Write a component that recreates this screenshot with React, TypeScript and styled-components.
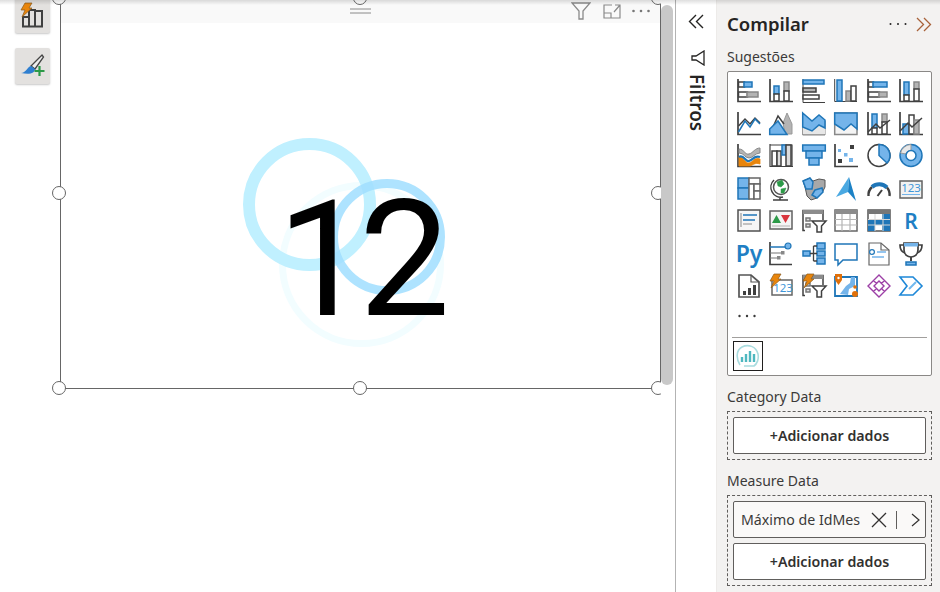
import type { ReactNode } from 'react'
import styled, { createGlobalStyle } from 'styled-components'

const D = '#404040'
const B = '#1f76b8'
const L = '#74b4ea'
const G = '#b4b4b4'
const O = '#e8850c'

const Letters = styled.text`
  font-family: "Noto Sans", sans-serif;
  font-weight: 600;
  fill: #1f7fc4;
  text-anchor: middle;
`

const Value = styled.text`
  font-family: "Noto Sans", sans-serif;
  fill: #3f96d8;
  text-anchor: middle;
`

const Box = ({ x, y, w, h, f = '#fff', s = D }: { x: number; y: number; w: number; h: number; f?: string; s?: string }) => (
  <rect x={x} y={y} width={w} height={h} fill={f} stroke={s} strokeWidth="1.5" />
)
const Ln = ({ d, s = D, w = 1.5, f = 'none' }: { d: string; s?: string; w?: number; f?: string }) => (
  <path d={d} stroke={s} strokeWidth={w} fill={f} />
)
const Axis = () => <Ln d="M1 0V22.5H24" w={1.7} />
const Bolt = () => (
  <path d="M5 0H12L9 5H12L2 14L5 7H1Z" fill={O} stroke="#8a5a1c" strokeWidth="0.7" />
)
const MoreIcon = ({ color, r = 1.2 }: { color: string; r?: number }) => (
  <svg width="18" height="4" viewBox="0 0 18 4">
    <circle cx="1.5" cy="2" r={r} fill={color} />
    <circle cx="9" cy="2" r={r} fill={color} />
    <circle cx="16.5" cy="2" r={r} fill={color} />
  </svg>
)
const SlicerBody = () => (
  <>
    <Ln d="M3 21.5H1V1.5H21V11" />
    <rect x="1" y="1" width="20" height="4" fill="#8c8c8c" />
    <Box x={4} y={9} w={4} h={3} f="#ddd" s="#777" />
    <Box x={4} y={15} w={4} h={3} f="#ddd" s="#777" />
    <Ln d="M10 12H24L19.5 17V23H15V17Z" f="#fff" />
  </>
)

const icons: ReactNode[] = [
  <>
    <Axis />
    <Box x={1.5} y={3} w={6} h={5} />
    <Box x={7} y={3} w={8} h={5} f={L} s={B} />
    <Box x={1.5} y={13} w={9} h={5} />
    <Box x={10} y={13} w={11} h={5} f={G} s="#888" />
  </>,
  <>
    <Axis />
    <Box x={5} y={7} w={5} h={8} f={L} s={B} />
    <Box x={5} y={15} w={5} h={7} />
    <Box x={15} y={3} w={5} h={9} f={G} s="#888" />
    <Box x={15} y={12} w={5} h={10} />
  </>,
  <>
    <Ln d="M1 0V23.5H23" w={1} />
    <Box x={1} y={1} w={21} h={4} f={L} s={B} />
    <Box x={1} y={9} w={13} h={4} f={G} s={D} />
    <Box x={1} y={16} w={16} h={4} />
  </>,
  <>
    <Ln d="M0.7 0V22.5H23" w={1} />
    <Box x={3} y={1} w={5} h={21} f={L} s={B} />
    <Box x={12} y={12} w={5} h={10} f={G} s="#888" />
    <Box x={17} y={7} w={5} h={15} />
  </>,
  <>
    <Axis />
    <Box x={1.5} y={3} w={5} h={5} />
    <Box x={6} y={3} w={14} h={5} f={L} s={B} />
    <Box x={1.5} y={13} w={11} h={5} />
    <Box x={12} y={13} w={8} h={5} f={G} s="#888" />
  </>,
  <>
    <Axis />
    <Box x={5} y={3} w={5} h={13} f={L} s={B} />
    <Box x={5} y={16} w={5} h={6} />
    <Box x={15} y={3} w={5} h={7} f={G} s="#888" />
    <Box x={15} y={10} w={5} h={12} />
  </>,
  <>
    <Axis />
    <Ln d="M1.5 14L8 7L13 12L18 6L23 11" />
    <Ln d="M1.5 20L8 9L13 15L18 7L23 12" s={B} />
  </>,
  <>
    <Ln d="M14 11L18 1L23 12V22H16Z" f={G} s="#999" w={1} />
    <Ln d="M4 15L9 4L15 12" />
    <Ln d="M0.7 22.5V17L9 9L18 22.5Z" f={L} s={B} />
  </>,
  <>
    <Ln d="M0.7 9V23H23V9" f={G} s="#888" w={1} />
    <rect x="1" y="14" width="22" height="8" fill="#e7e7e7" />
    <Ln d="M0.7 1L10 9L17 3L23 8V16L17 13L10 19L0.7 15Z" f={L} s={B} />
  </>,
  <>
    <Ln d="M0.7 1H23V22.5H0.7Z" f="#f4f4f4" s="#888" />
    <Ln d="M0.7 1H23V17L17 12L10 18L0.7 12Z" f={L} s={B} />
  </>,
  <>
    <Axis />
    <Box x={5} y={2} w={5} h={14} f={L} s={B} />
    <Box x={5} y={16} w={5} h={6} />
    <Box x={15} y={2} w={5} h={8} f={G} s="#888" />
    <Box x={15} y={10} w={5} h={12} />
    <Ln d="M1 20L9 12L13 16L23 8" />
  </>,
  <>
    <Axis />
    <Box x={4} y={12} w={6} h={10} f={L} s={B} />
    <Box x={10} y={3} w={5} h={19} />
    <Box x={15} y={8} w={5} h={14} f={G} s="#888" />
    <Ln d="M1 19L9 11L13 15L23 6" />
  </>,
  <>
    <Axis />
    <Ln d="M2 5C7 5 8 11 12 10S18 4 23 4V9C18 9 16 14 12 14S7 9 2 9Z" f={G} s="#888" w={1} />
    <Ln d="M2 13C6 11 8 20 12 19S17 13 23 15V20C17 18 16 22 12 22H2Z" f={O} s={O} w={0.8} />
    <Ln d="M2 13C7 10 8 18 12 17S17 11 23 13" s={B} w={2.2} />
  </>,
  <>
    <Ln d="M1 0V22.5H24M1 1H23V22" w={1.2} />
    <Box x={3} y={7} w={5} h={15} />
    <Box x={8} y={7} w={4} h={15} f="#ddd" />
    <Box x={13} y={1} w={4} h={10} f={L} s={B} />
    <Box x={17} y={1} w={5} h={21} f="#ddd" />
  </>,
  <>
    <Box x={0.7} y={1} w={22.6} h={6} f={L} s={B} />
    <Box x={4} y={7} w={16} h={7} f={L} s={B} />
    <Box x={7} y={14} w={10} h={7} f={L} s={B} />
  </>,
  <>
    <Axis />
    <rect x="4" y="5" width="3" height="3" fill={L} />
    <rect x="16" y="1" width="4" height="4" fill={D} />
    <rect x="10" y="9" width="3.5" height="3.5" fill={L} />
    <rect x="4" y="15" width="4" height="4" fill={D} />
    <rect x="15" y="14" width="4" height="4" fill={L} />
  </>,
  <>
    <circle cx="12" cy="11.5" r="11" fill="#fff" stroke={D} strokeWidth="1.5" />
    <Ln d="M12 11.5V0.5A11 11 0 0 1 20 19Z" f={L} s={B} />
  </>,
  <>
    <circle cx="12" cy="11.5" r="11" fill={L} stroke={B} strokeWidth="1.5" />
    <Ln d="M1.5 9A11 11 0 0 1 12 0.5V6.5A5 5 0 0 0 7 10Z" f="#e8e8e8" s="#999" w={1} />
    <circle cx="12" cy="11.5" r="5" fill="#fff" stroke={B} strokeWidth="1.5" />
  </>,
  <>
    <Box x={1} y={1} w={11} h={10} f={L} s={B} />
    <Box x={1} y={11} w={11} h={11} f={L} s={B} />
    <Box x={12} y={1} w={11} h={6} f="#fff" s="#666" />
    <Box x={12} y={7} w={5} h={15} f="#fff" s="#666" />
    <Box x={17} y={7} w={6} h={7} f="#fff" s="#666" />
    <Box x={17} y={14} w={6} h={8} f="#fff" s="#666" />
  </>,
  <>
    <circle cx="12" cy="10" r="7.5" fill="#fff" stroke="#555" strokeWidth="1.5" />
    <Ln d="M8 5L13 3L15 7L12 10L9 9ZM12 12L17 11L15 16L12 16Z" f="#2c9a48" s="#2c9a48" w={0.5} />
    <Ln d="M5 3A10 10 0 0 0 14 20M11 20V23M4 23H19" w={1.5} />
  </>,
  <>
    <Ln d="M1 4L8 1L11 4L17 2L23 3V10L20 16L15 21L9 23L5 19L3 10Z" f="#a8a8a8" s="#555" w={1} />
    <Ln d="M1 4L8 1L11 5L10 12L4 12Z" f={L} s={B} />
    <Ln d="M13 13L20 11L21 15L15 21L10 18Z" f={L} s={B} />
  </>,
  <>
    <path d="M2 20L15 0L14 15Z" fill="#4aa9e2" />
    <path d="M15 0L22 24L14 15Z" fill="#1c82c6" />
  </>,
  <>
    <Ln d="M1.5 19A11 11 0 0 1 5 10" w={2.4} />
    <Ln d="M5 10A11 11 0 0 1 20 10.5" s={B} w={4} />
    <Ln d="M20 10.5A11 11 0 0 1 22.5 19" w={2.4} />
    <Ln d="M10.5 19L15 13" w={2} />
  </>,
  <>
    <Box x={1} y={4} w={22} h={17} f="#f2f2f2" s="#606060" />
    <Value x="12" y="15" fontSize="11.5">123</Value>
    <Ln d="M3 17.5H21" s={L} w={1} />
  </>,
  <>
    <Box x={1} y={1} w={22} h={21} f="#f6f6f6" s="#505050" />
    <Ln d="M6 6H20M6 11H18" s={B} w={1.6} />
    <Ln d="M6 15H15" s={G} w={1.6} />
    <Ln d="M4 4V18" s="#888" w={1} />
  </>,
  <>
    <Box x={1} y={2} w={22} h={18} f="#f4f4f4" s="#606060" />
    <path d="M3 14L7.5 6L12 14Z" fill="#2c9a48" />
    <path d="M12 6H21L16.5 14Z" fill="#d9343c" />
    <Ln d="M3 17H21" s={G} w={1} />
  </>,
  <SlicerBody />,
  <>
    <Box x={1} y={1} w={22} h={21} f="#fff" s="#666" />
    <rect x="1" y="1" width="22" height="4" fill="#8c8c8c" />
    <Ln d="M8 5V22M16 5V22M1 10.5H23M1 16H23" s={G} w={1.2} />
  </>,
  <>
    <Box x={1} y={1} w={22} h={21} f="#fff" s="#555" />
    <rect x="1" y="1" width="22" height="4" fill="#777" />
    <rect x="15" y="5" width="8" height="17" fill={B} />
    <rect x="1" y="10" width="22" height="6" fill={B} />
    <rect x="1" y="16" width="7" height="6" fill={B} />
    <Ln d="M8 5V22M16 5V22M1 10.5H23M1 16H23" s="#d5d5d5" w={1} />
  </>,
  <Letters x="12" y="19.5" fontSize="21">R</Letters>,
  <Letters x="12" y="19.5" fontSize="23">Py</Letters>,
  <>
    <Ln d="M1 0V22.5H23" w={1.7} />
    <Ln d="M1 5H17" s={B} w={1.5} />
    <circle cx="19" cy="4" r="3" fill={L} stroke={B} strokeWidth="1.2" />
    <Ln d="M1 11H13M1 16H9" s="#777" w={1.2} />
    <rect x="12" y="9" width="3.5" height="3.5" fill="#888" />
    <rect x="8" y="14" width="3.5" height="3.5" fill="#888" />
  </>,
  <>
    <Box x={1} y={9} w={7} h={5} f={L} s={B} />
    <Box x={15} y={1} w={8} h={6} f={L} s={B} />
    <Box x={15} y={9} w={8} h={5} f={L} s={B} />
    <Box x={15} y={16} w={8} h={6} f={L} s={B} />
    <Ln d="M8 11.5H15M11.5 4V19M11.5 4H15M11.5 19H15" w={1.3} />
  </>,
  <Ln d="M1 2H23V18H9L4 23V18H1Z" f="#fff" s={B} />,
  <>
    <Ln d="M2 1H14L22 8V23H2Z" f="#fff" s="#666" w={1.2} />
    <Ln d="M14 1V8H22" s="#666" w={1.2} />
    <circle cx="5" cy="10" r="2.4" fill="#fff" stroke={B} strokeWidth="1.2" />
    <Ln d="M10 10H19M5 15H17" s={L} w={1.4} />
  </>,
  <>
    <Ln d="M5 1H19V8C19 13 15 15 12 15S5 13 5 8Z" f="#fff" w={1.7} />
    <rect x="5" y="1" width="14" height="3.5" fill={L} />
    <Ln d="M5 3H1C1 8 3 10 6 11M19 3H23C23 8 21 10 18 11" w={1.7} />
    <Ln d="M12 15V19" w={2} />
    <Box x={7} y={20} w={10} h={3} f={L} s={B} />
  </>,
  <>
    <Ln d="M2 1H14L22 8V23H2Z" f="#fff" s="#555" w={1.7} />
    <Ln d="M14 1V8H22" s="#555" w={1.2} />
    <rect x="6" y="17" width="3" height="4" fill={D} />
    <rect x="11" y="14" width="3" height="7" fill={D} />
    <rect x="16" y="11" width="3" height="10" fill={D} />
  </>,
  <>
    <Box x={3} y={6} w={20} h={15} f="#fff" s="#666" />
    <Value x="14" y="17.5" fontSize="11.5">123</Value>
    <Bolt />
  </>,
  <>
    <SlicerBody />
    <Bolt />
  </>,
  <>
    <Ln d="M1 3H23V22H1Z" f="#fff" s={B} w={1.8} />
    <Ln d="M6 20L12 12L16 9L17 3H21V12L15 15L14 21Z" f={L} s="none" />
    <path d="M1 0H8V6L4.5 11L1 6Z" fill="#e0700a" />
    <circle cx="4.5" cy="4" r="1.2" fill="#fff" />
    <circle cx="21" cy="13" r="1.8" fill="#e0700a" />
    <circle cx="21" cy="20" r="3" fill="#e0700a" />
  </>,
  <Ln d="M12 1L23 12L12 23L1 12ZM12 7L17 12L12 17L7 12ZM6.5 6.5L9.5 9.5M17.5 6.5L14.5 9.5M6.5 17.5L9.5 14.5M17.5 17.5L14.5 14.5" s="#9c3fa6" w={1.4} />,
  <>
    <Ln d="M1 3H14L23 12L14 21H1L8 12Z" f="#fff" s="#1e88d8" w={1.6} />
    <Ln d="M10 15L17 8" s="#6fb8ee" w={2} />
  </>,
]

const GlobalStyle = createGlobalStyle`
  html, body {
    margin: 0;
    height: 100%;
    overflow: hidden;
    font-family: "Noto Sans", "Open Sans", sans-serif;
    color: #252423;
  }
`

export default function App() {
  return (
    <>
      <GlobalStyle />
      <Page>
        <TopShadow />
        <Canvas>
          <Floating>
            <FloatButton $cut>
              <svg width="26" height="26" viewBox="0 0 26 26">
                <Ln d="M3 24V15H9V24M9 24V8H15V24M15 24V9H22V24M2 24.5H23" w={2} />
                <g transform="translate(0 1)">
                  <Bolt />
                </g>
              </svg>
            </FloatButton>
            <FloatButton>
              <svg width="26" height="26" viewBox="0 0 26 26">
                <Ln d="M11 13L22 2L23.5 4L15 16Z" f="#eee" s="#444" w={1.3} />
                <path d="M1 20C6 20 7 14 11 13L15 16C15 20 10 22 1 20Z" fill="#2f7fd0" />
                <Ln d="M19.5 13V23M14.5 18H24.5" s="#2c9a48" w={2.2} />
              </svg>
            </FloatButton>
          </Floating>
          <Viewport>
            <Visual>
              <VisualHeader>
                <svg width="21" height="6" viewBox="0 0 21 6">
                  <Ln d="M0 1H21M0 5H21" s="#8a8a8a" w={1} />
                </svg>
                <HeaderTools>
                  <svg width="20" height="18" viewBox="0 0 20 18">
                    <Ln d="M1 1H19L12 9V17H8V9Z" s="#8a8a8a" w={1.3} />
                  </svg>
                  <svg width="18" height="15" viewBox="0 0 18 15">
                    <Ln d="M9 1H1V14H17V6M1 9H8V14M11 8L17 1M12 1H17V6" s="#8a8a8a" w={1.2} />
                  </svg>
                  <MoreIcon color="#777" r={1.3} />
                </HeaderTools>
              </VisualHeader>
              <Chart>
                <Ring $size={165} $x={218} $y={159} $width={7} $color="#f2fdff" />
                <Ring $size={133} $x={182} $y={115} $width={12} $color="#c0f0ff" />
                <Ring $size={116} $x={268} $y={156} $width={9} $color="rgba(160, 222, 255, 0.85)" />
                <Value12>12</Value12>
              </Chart>
            </Visual>
            <Handle $x={59} $y={-2} />
            <Handle $x={360} $y={-2} />
            <Handle $x={658} $y={-2} />
            <Handle $x={59} $y={193} />
            <Handle $x={658} $y={193} />
            <Handle $x={59} $y={388} />
            <Handle $x={360} $y={388} />
            <Handle $x={658} $y={388} />
          </Viewport>
          <Scrollbar />
        </Canvas>

        <FilterRail>
          <svg width="16" height="15" viewBox="0 0 16 15">
            <Ln d="M8 1L1.5 7.5L8 14M15 1L8.5 7.5L15 14" s="#252423" w={1.4} />
          </svg>
          <MegaphoneWrap>
            <svg width="15" height="16" viewBox="0 0 15 16">
              <Ln d="M1 6H5L13 1V15L5 10H1Z" s="#252423" w={1.3} />
            </svg>
          </MegaphoneWrap>
          <RailLabel>Filtros</RailLabel>
        </FilterRail>

        <BuildPane>
          <PaneHeader>
            <PaneTitle>Compilar</PaneTitle>
            <PaneActions>
              <MoreIcon color="#252423" r={1} />
              <svg width="16" height="15" viewBox="0 0 16 15">
                <Ln d="M1 1L7.5 7.5L1 14" s="#a8623a" w={1.3} />
                <Ln d="M8 1L14.5 7.5L8 14" s="#a8623a" w={1.3} />
              </svg>
            </PaneActions>
          </PaneHeader>
          <Label>Sugestões</Label>
          <Gallery>
            <IconGrid>
              {icons.map((icon, i) => (
                <Glyph key={i} viewBox="0 0 24 24">
                  {icon}
                </Glyph>
              ))}
            </IconGrid>
            <MoreRow>
              <MoreIcon color="#3a3a3a" r={1.2} />
            </MoreRow>
            <Divider />
            <CustomVisual>
              <svg width="24" height="24" viewBox="0 0 24 24">
                <Ln d="M4 21C0 15 0 6 6 3C12 0 20 2 22 10C23 15 21 20 18 22H8" s="#a9dcdf" w={1.6} />
                <Ln d="M6 18V13M10 18V10M14 18V7M18 18V10" s="#4fb8c0" w={2.4} />
              </svg>
            </CustomVisual>
          </Gallery>

          <Label>Category Data</Label>
          <Well>
            <AddButton>+Adicionar dados</AddButton>
          </Well>

          <Label>Measure Data</Label>
          <Well>
            <FieldPill>
              <FieldName>Máximo de IdMes</FieldName>
              <svg width="16" height="16" viewBox="0 0 16 16">
                <Ln d="M1 1L15 15M15 1L1 15" s="#323130" w={1.3} />
              </svg>
              <PillSeparator />
              <svg width="9" height="14" viewBox="0 0 9 14">
                <Ln d="M1 1L8 7L1 13" s="#323130" w={1.2} />
              </svg>
            </FieldPill>
            <AddButton>+Adicionar dados</AddButton>
          </Well>
        </BuildPane>
      </Page>
    </>
  )
}

const Page = styled.div`
  position: relative;
  display: flex;
  width: 940px;
  height: 592px;
  overflow: hidden;
  background: #fff;
`

const TopShadow = styled.div`
  position: absolute;
  inset: 0 0 auto 0;
  height: 5px;
  z-index: 5;
  background: linear-gradient(rgba(0, 0, 0, 0.13), rgba(0, 0, 0, 0));
`

const Canvas = styled.div`
  position: relative;
  width: 675px;
  flex: none;
  border-right: 1px solid #b3b3b3;
  background: #fff;
`

const Floating = styled.div`
  position: absolute;
  left: 15px;
  top: -3px;
  z-index: 3;
  display: flex;
  flex-direction: column;
  gap: 15px;
`

const FloatButton = styled.div<{ $cut?: boolean }>`
  width: 35px;
  height: 36px;
  box-sizing: border-box;
  display: flex;
  align-items: ${(p) => (p.$cut ? 'flex-start' : 'center')};
  justify-content: center;
  padding-top: ${(p) => (p.$cut ? '5px' : '0')};
  border-radius: 2px;
  background: #e3e1df;
  box-shadow: 0 1px 2px rgba(0, 0, 0, 0.22);
`

const Viewport = styled.div`
  position: absolute;
  inset: 0 auto 0 0;
  width: 661px;
  overflow: hidden;
`

const Visual = styled.div`
  position: absolute;
  left: 60px;
  top: -2px;
  width: 601px;
  height: 391px;
  box-sizing: border-box;
  border: 1px solid #666;
  border-top: none;
  display: flex;
  flex-direction: column;
`

const VisualHeader = styled.div`
  position: relative;
  height: 25px;
  flex: none;
  background: #f9f9f9;
  display: flex;
  align-items: center;
  justify-content: center;
  padding-top: 1px;
  box-sizing: border-box;
`

const HeaderTools = styled.div`
  position: absolute;
  right: 10px;
  top: 4px;
  display: flex;
  align-items: center;
  gap: 11.5px;
`

const Chart = styled.div`
  position: relative;
  flex: 1;
`

const Ring = styled.div<{ $size: number; $x: number; $y: number; $width: number; $color: string }>`
  position: absolute;
  left: ${(p) => p.$x}px;
  top: ${(p) => p.$y}px;
  width: ${(p) => p.$size}px;
  height: ${(p) => p.$size}px;
  box-sizing: border-box;
  border: ${(p) => p.$width}px solid ${(p) => p.$color};
  border-radius: 50%;
`

const Value12 = styled.div`
  position: absolute;
  left: 216px;
  top: 145px;
  font-family: Roboto, "Liberation Sans", sans-serif;
  font-size: 162px;
  line-height: 184px;
  letter-spacing: -9px;
  color: #000;
`

const Handle = styled.div<{ $x: number; $y: number }>`
  position: absolute;
  left: ${(p) => p.$x - 7}px;
  top: ${(p) => p.$y - 7}px;
  width: 14px;
  height: 14px;
  box-sizing: border-box;
  border: 1px solid #666;
  border-radius: 50%;
  background: #fff;
`

const Scrollbar = styled.div`
  position: absolute;
  left: 661px;
  top: 5px;
  width: 12px;
  height: 380px;
  border-radius: 6px;
  background: #c8c8c8;
`

const FilterRail = styled.div`
  width: 40px;
  flex: none;
  box-sizing: border-box;
  padding-top: 14px;
  background: #fff;
  display: flex;
  flex-direction: column;
  align-items: center;
`

const MegaphoneWrap = styled.div`
  margin: 20px 0 0 4px;
  height: 16px;
`

const RailLabel = styled.div`
  writing-mode: vertical-rl;
  margin: 9px 0 0 1px;
  font-size: 18.8px;
  font-weight: 600;
  line-height: 24px;
`

const BuildPane = styled.div`
  flex: 1;
  box-sizing: border-box;
  padding: 12px 8px 0 10px;
  background: #f3f2f1;
  border-left: 1px solid #edebe9;
`

const PaneHeader = styled.div`
  display: flex;
  align-items: center;
  justify-content: space-between;
  height: 24px;
`

const PaneTitle = styled.div`
  font-size: 18.5px;
  font-weight: 600;
  line-height: 24px;
`

const PaneActions = styled.div`
  display: flex;
  align-items: center;
  gap: 9px;
`

const Label = styled.div`
  margin-top: 11px;
  font-size: 14px;
  line-height: 20px;
  color: #3b3a39;
`

const Gallery = styled.div`
  box-sizing: border-box;
  height: 305px;
  margin-top: 4px;
  padding: 7px 4px 0;
  background: #fff;
  border: 1px solid #8a8886;
  border-radius: 2px;
`

const IconGrid = styled.div`
  display: grid;
  grid-template-columns: repeat(6, 24px);
  gap: 8.5px 8.4px;
  padding-left: 5px;
`

const Glyph = styled.svg`
  display: block;
  width: 24px;
  height: 24px;
  overflow: visible;
`

const MoreRow = styled.div`
  height: 20px;
  margin-top: 8px;
  padding-left: 6px;
  display: flex;
  align-items: center;
`

const Divider = styled.div`
  height: 1px;
  margin-top: 11px;
  background: #a19f9d;
`

const CustomVisual = styled.div`
  width: 30px;
  height: 30px;
  box-sizing: border-box;
  margin: 3px 0 0 1px;
  border: 1px solid #201f1e;
  display: flex;
  align-items: center;
  justify-content: center;
`

const Well = styled.div`
  box-sizing: border-box;
  margin-top: 4px;
  padding: 5px;
  display: flex;
  flex-direction: column;
  gap: 5px;
  border: 1px dashed #605e5c;
`

const AddButton = styled.div`
  height: 37px;
  box-sizing: border-box;
  display: flex;
  align-items: center;
  justify-content: center;
  background: #fff;
  border: 1px solid #605e5c;
  border-radius: 2px;
  font-size: 14.2px;
  font-weight: 600;
  color: #323130;
`

const FieldPill = styled.div`
  height: 37px;
  box-sizing: border-box;
  display: flex;
  align-items: center;
  padding: 0 5px 0 7px;
  background: #faf9f8;
  border: 1px solid #605e5c;
  border-radius: 2px;
`

const FieldName = styled.span`
  flex: 1;
  font-size: 14.2px;
  color: #3b3a39;
  white-space: nowrap;
`

const PillSeparator = styled.div`
  width: 1px;
  height: 18px;
  margin: 0 14px 0 9px;
  background: #605e5c;
`
